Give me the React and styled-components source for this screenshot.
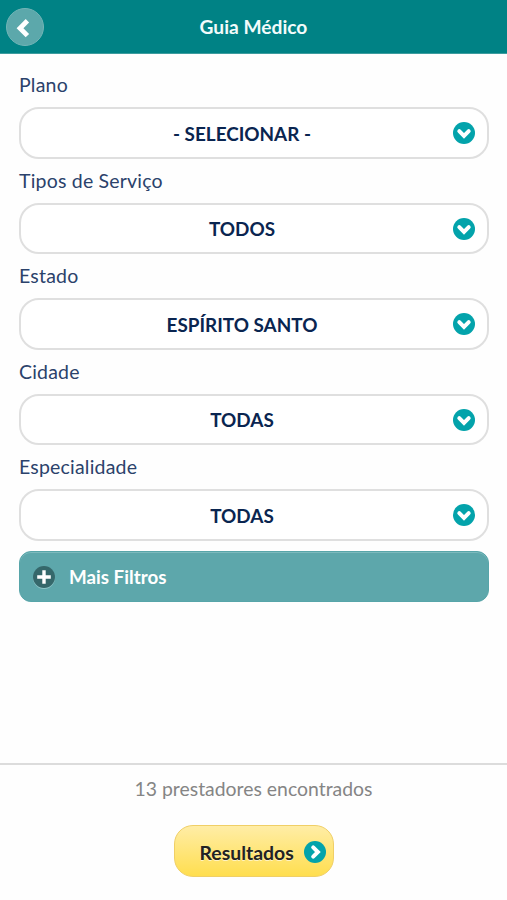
import React, { useState } from 'react';
import styled, { createGlobalStyle } from 'styled-components';

const filters = [
    { label: 'Plano', value: '- SELECIONAR -' },
    { label: 'Tipos de Serviço', value: 'TODOS' },
    { label: 'Estado', value: 'ESPÍRITO SANTO' },
    { label: 'Cidade', value: 'TODAS' },
    { label: 'Especialidade', value: 'TODAS' },
];

// same chevron everywhere, only the direction changes
const Chevron = ({ turn = 0 }) => (
    <svg viewBox="0 0 22 22" fill="none" stroke="#fff" strokeWidth="4">
        <path d="M6.3 9.2 L11 13.9 L15.7 9.2" strokeLinecap="round" transform={`rotate(${turn} 11 11)`} />
    </svg>
);

const App = () => {
    const [list] = useState(filters);

    return (
        <>
        <GlobalStyle />
        <Screen>
            <Header>
                <BackButton aria-label="Voltar">
                    <svg viewBox="0 0 36 36" fill="none" stroke="#fff" strokeWidth="4.8">
                        <path d="M20.4 11.8 L13 19.2 L20.4 26.6" />
                    </svg>
                </BackButton>
                <Title>Guia Médico</Title>
            </Header>
            <Form>
                {list.map((item) => (
                    <Field key={item.label}>
                        <Label>{item.label}</Label>
                        <Select>
                            <Value>{item.value}</Value>
                            <Circle><Chevron /></Circle>
                        </Select>
                    </Field>
                ))}
                <MoreFilters>
                    <Circle $color="#35686b" $halo>
                        <svg viewBox="0 0 22 22" stroke="#fff" strokeWidth="3.4">
                            <path d="M11 4.2 V17.8 M4.2 11 H17.8" />
                        </svg>
                    </Circle>
                    Mais Filtros
                </MoreFilters>
            </Form>
            <Footer>
                <Found>13 prestadores encontrados</Found>
                <ResultButton>
                    Resultados
                    <Circle><Chevron turn={-90} /></Circle>
                </ResultButton>
            </Footer>
        </Screen>
        </>
    )
}

export default App;


const GlobalStyle = createGlobalStyle`
    * {
        box-sizing: border-box;
    }
    body {
        margin: 0;
        background: #fefefe;
        font-family: Lato, "Open Sans", sans-serif;
    }
    button {
        font-family: inherit;
        margin: 0;
    }
    svg {
        display: block;
        width: 100%;
        height: 100%;
    }
`

const Screen = styled.div`
    display: flex;
    flex-direction: column;
    height: 100vh;
`

const Header = styled.header`
    display: grid;
    grid-template-columns: 38px 1fr 38px;
    align-items: center;
    height: 54px;
    padding: 0 6px;
    background: #008285;
    border-bottom: 1px solid #3d9c9e;
`

const BackButton = styled.button`
    width: 38px;
    height: 38px;
    padding: 0;
    border: 1px solid #73b5b7;
    border-radius: 50%;
    background: #5ca8ab;
`

const Title = styled.h1`
    margin: 0;
    color: #f2fbfb;
    font-size: 19.2px;
    line-height: 24px;
    font-weight: 700;
    text-align: center;
`

const Form = styled.main`
    flex: 1;
    padding: 9px 18px 0 19px;
`

const Field = styled.div`
    height: 95.5px;
`

const Label = styled.div`
    height: 44px;
    line-height: 43px;
    color: #2b426b;
    font-size: 19.5px;
    letter-spacing: 0.2px;
`

const Select = styled.button`
    display: flex;
    align-items: center;
    width: 100%;
    height: 51.6px;
    padding: 1px 12px 0 0;
    border: 2px solid #dfdfdf;
    border-radius: 20px;
    background: #fff;
    color: #0a2550;
`

const Value = styled.span`
    flex: 1;
    padding-left: 10px;
    font-size: 18.9px;
    font-weight: 700;
    text-align: center;
`

const Circle = styled.span`
    flex: none;
    width: 22px;
    height: 22px;
    border-radius: 50%;
    background: ${(props) => props.$color || '#03a3ab'};
    box-shadow: ${(props) => (props.$halo ? '0 1px 0 #8fc6c8' : 'none')};
`

const MoreFilters = styled.button`
    display: flex;
    align-items: center;
    gap: 14px;
    width: 100%;
    height: 51px;
    margin-top: 10px;
    padding: 1px 13px 0;
    border: 1px solid #57a5a9;
    border-radius: 12px;
    background: #5da7ab;
    box-shadow: inset 0 1px 0 #7dbabd;
    color: #fff;
    font-size: 18.8px;
    font-weight: 700;
`

const Footer = styled.footer`
    display: flex;
    flex-direction: column;
    align-items: center;
    height: 137px;
    border-top: 2px solid #dcdcdc;
`

const Found = styled.p`
    margin: 11px 0 24px;
    color: #858585;
    font-size: 19.4px;
    line-height: 25px;
`

const ResultButton = styled.button`
    display: flex;
    align-items: center;
    justify-content: space-between;
    width: 160px;
    height: 52px;
    padding: 2px 7px 0 25px;
    border: 1px solid #f0cf66;
    border-radius: 19px;
    background: linear-gradient(#ffeda6, #ffde4f);
    color: #222;
    font-size: 19.4px;
    font-weight: 700;
    text-shadow: 0 1px 0 #fff3c0;
`
